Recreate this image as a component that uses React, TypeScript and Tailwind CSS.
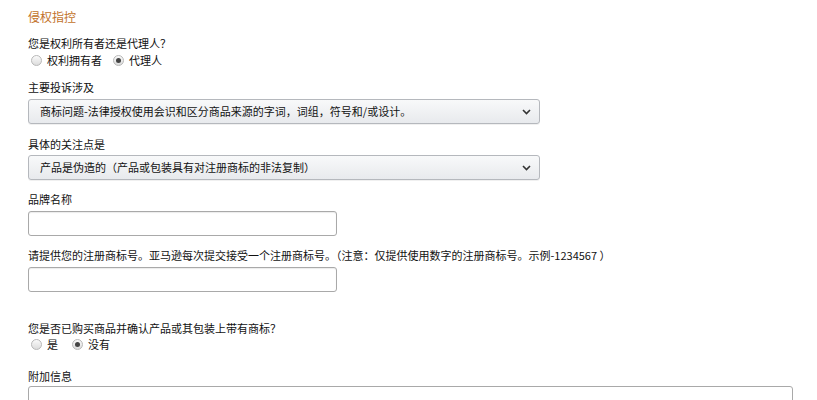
import React from "react";

const font = { fontFamily: '"Noto Sans CJK SC", "Liberation Sans", sans-serif' };

function Radio({ checked, label }: { checked?: boolean; label: string }) {
  return (
    <label className="flex items-center gap-[5px]">
      <span className="flex h-[11px] w-[11px] items-center justify-center rounded-full border border-[#b8b8b8] bg-gradient-to-b from-[#fafafa] to-[#dcdcdc]">
        {checked && <span className="h-[5px] w-[5px] rounded-full bg-[#444]" />}
      </span>
      <span>{label}</span>
    </label>
  );
}

function Select({ value }: { value: string }) {
  return (
    <div className="flex h-[25px] w-[512px] items-center justify-between rounded-[3px] border border-[#b5b8bd] bg-gradient-to-b from-[#f8f9fa] to-[#e8eaed] pl-[11px] pr-[7px] shadow-[0_1px_0_rgba(0,0,0,0.06)]">
      <span>{value}</span>
      <svg width="9" height="6" viewBox="0 0 9 6" className="mr-[1px]">
        <path d="M1 1l3.5 3.5L8 1" fill="none" stroke="#333" strokeWidth="1.6" />
      </svg>
    </div>
  );
}

function Input() {
  return <div className="h-[25px] w-[309px] rounded-[3px] border border-[#a9a9a9] bg-white shadow-[inset_0_1px_1px_rgba(0,0,0,0.08)]" />;
}

export default function App() {
  return (
    <div className="h-[400px] w-[817px] overflow-hidden bg-white pl-[28px] text-[11px] text-[#111]" style={font}>
      <div className="pt-[9px] text-[12px] leading-[16px] text-[#c2722a]">侵权指控</div>

      <div className="mt-[11px] leading-[15px]">您是权利所有者还是代理人？</div>
      <div className="mt-[1px] flex gap-[11px] pl-[3px] leading-[16px]">
        <Radio label="权利拥有者" />
        <Radio checked label="代理人" />
      </div>

      <div className="mt-[12px] leading-[15px]">主要投诉涉及</div>
      <div className="mt-[4px]">
        <Select value="商标问题-法律授权使用会识和区分商品来源的字词，词组，符号和/或设计。" />
      </div>

      <div className="mt-[13px] leading-[15px]">具体的关注点是</div>
      <div className="mt-[3px]">
        <Select value="产品是伪造的（产品或包装具有对注册商标的非法复制）" />
      </div>

      <div className="mt-[12px] leading-[15px]">品牌名称</div>
      <div className="mt-[4px]">
        <Input />
      </div>

      <div className="mt-[12px] leading-[15px]">请提供您的注册商标号。亚马逊每次提交接受一个注册商标号。（注意：仅提供使用数字的注册商标号。示例-1234567 ）</div>
      <div className="mt-[4px]">
        <Input />
      </div>

      <div className="mt-[29px] leading-[15px]">您是否已购买商品并确认产品或其包装上带有商标？</div>
      <div className="mt-[0px] flex gap-[14px] pl-[3px] leading-[16px]">
        <Radio label="是" />
        <Radio checked label="没有" />
      </div>

      <div className="mt-[17px] leading-[15px]">附加信息</div>
      <div className="mt-[2px] h-[60px] w-[765px] rounded-[3px] border border-[#a9a9a9] bg-white" />
    </div>
  );
}
